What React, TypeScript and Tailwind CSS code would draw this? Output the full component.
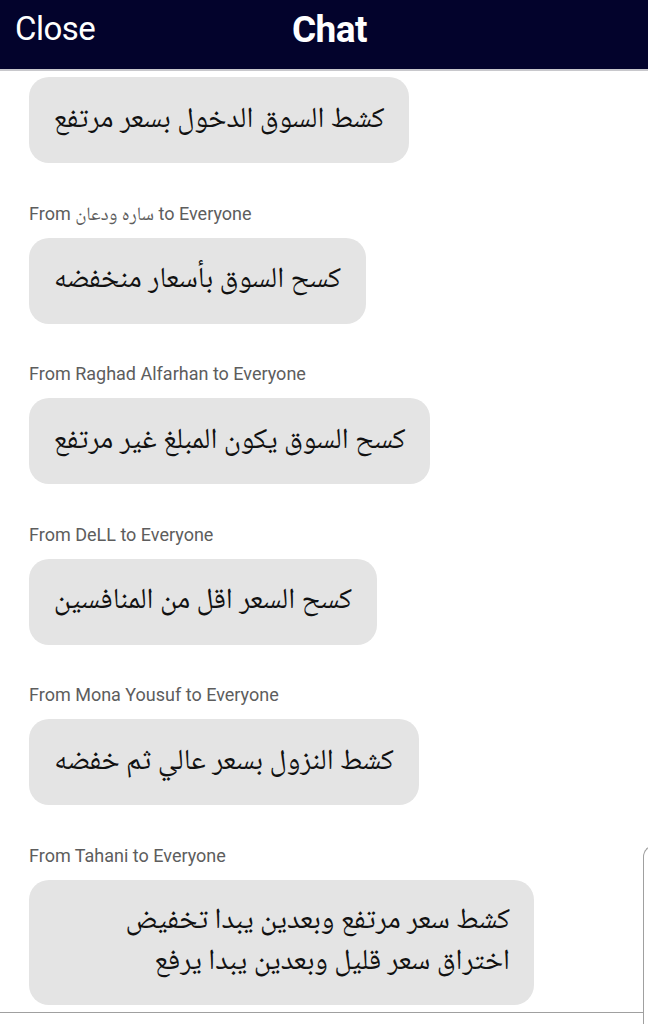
import React from 'react'

type Msg = {
  from?: string
  arabicName?: boolean
  lines: string[]
  width: string
}

const messages: Msg[] = [
  { lines: ['كشط السوق الدخول بسعر مرتفع'], width: 'w-[380px]' },
  { from: 'ساره ودعان', arabicName: true, lines: ['كسح السوق بأسعار منخفضه'], width: 'w-[337px]' },
  { from: 'Raghad Alfarhan', lines: ['كسح السوق يكون المبلغ غير مرتفع'], width: 'w-[401px]' },
  { from: 'DeLL', lines: ['كسح السعر اقل من المنافسين'], width: 'w-[348px]' },
  { from: 'Mona Yousuf', lines: ['كشط النزول بسعر عالي ثم خفضه'], width: 'w-[390px]' },
  {
    from: 'Tahani',
    lines: ['كشط سعر مرتفع وبعدين يبدا تخفيض', 'اختراق سعر قليل وبعدين يبدا يرفع'],
    width: 'w-[505px]',
  },
]

const arabic = { fontFamily: '"Noto Naskh Arabic", "Noto Sans Arabic", "DejaVu Sans", sans-serif' }

export default function App() {
  return (
    <div className="relative h-[1024px] w-[648px] overflow-hidden bg-white font-['Roboto',sans-serif]">
      {/* Header */}
      <div className="flex h-[71px] items-start border-b-2 border-[#c8c8cc] bg-[#03032c] px-[15px] pt-[12px] text-white">
        <span className="w-[120px] text-[33px] leading-[34px] tracking-[-0.5px]">Close</span>
        <span className="ml-[157px] text-[37px] font-bold leading-[36px] tracking-[-0.6px]">Chat</span>
      </div>

      {/* Messages */}
      <div className="flex flex-col px-[29px] pt-[6px]">
        {messages.map((m, i) => (
          <div key={i} className="mb-[40.5px] flex flex-col items-start">
            {m.from && (
              <div className="mb-[14px] h-[20px] text-[18px] leading-[20px] text-[#5d5d5d]">
                From{' '}
                {m.arabicName ? (
                  <span style={arabic} className="text-[19px]">
                    {m.from}
                  </span>
                ) : (
                  m.from
                )}{' '}
                to Everyone
              </div>
            )}
            <div
              dir="rtl"
              className={`${m.width} flex flex-col justify-center rounded-[20px] bg-[#e4e4e4] ${
                m.lines.length > 1 ? 'h-[125px] px-[24px] text-right' : 'h-[86px] px-[10px] text-center'
              } text-[29px] leading-[41px] text-[#111]`}
              style={arabic}
            >
              <p className="whitespace-nowrap">
                {m.lines.map((l, j) => (
                  <React.Fragment key={j}>
                    {j > 0 && <br />}
                    {l}
                  </React.Fragment>
                ))}
              </p>
            </div>
          </div>
        ))}
      </div>

      {/* bottom input edge */}
      <div className="absolute left-0 top-[1012px] h-[12px] w-[643px] border-t border-[#a0a0a0] bg-white" />
      <div className="absolute left-[643px] top-[845px] h-[200px] w-[30px] rounded-tl-[12px] border-l border-t border-[#a0a0a0] bg-white" />
    </div>
  )
}
